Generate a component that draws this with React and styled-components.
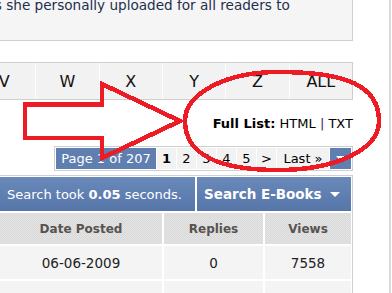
import React from 'react';
import styled, { createGlobalStyle } from 'styled-components';

const GlobalStyle = createGlobalStyle`
	html, body {
		margin: 0;
		padding: 0;
		background: #fff;
	}
	body {
		font-family: "DejaVu Sans", Verdana, sans-serif;
	}
`;

const Page = styled.div`
	position: relative;
	width: 392px;
	height: 293px;
	overflow: hidden;
	display: flex;
	align-items: flex-start;
	background: #fff;
`;

const Main = styled.div`
	width: 353px;
	flex-shrink: 0;
`;

const Gutter = styled.div`
	margin-left: 36px;
	width: 2px;
	align-self: stretch;
	background: #dadada;
`;

const Intro = styled.div`
	margin-top: -6px;
	height: 47px;
	box-sizing: border-box;
	padding-top: 2px;
	background: #f5f5f5;
	border-right: 1px solid #d0d0d0;
	border-bottom: 1px solid #d0d0d0;
	font-size: 13.6px;
	line-height: 18px;
	color: #1e2e4c;
	white-space: nowrap;
	overflow: hidden;
	text-indent: -9px;
`;

const LetterBar = styled.div`
	margin-top: 21px;
	margin-left: -28px;
	height: 38px;
	box-sizing: border-box;
	border: 1px solid #cfcfcf;
	background: #fff;
	display: grid;
	grid-template-columns: repeat(6, 1fr);
	gap: 1px;
`;

const Letter = styled.div`
	background: #f2f2f2;
	display: flex;
	align-items: center;
	justify-content: center;
	font-size: 16px;
	color: #111;
`;

const FullList = styled.div`
	height: 46px;
	display: flex;
	align-items: center;
	justify-content: flex-end;
	font-size: 13px;
	color: #000;
	white-space: pre;
`;

const Strong = styled.b`
	font-weight: bold;
`;

const Pipe = styled.span`
	color: #4a1a6a;
`;

const PagerRow = styled.div`
	display: flex;
	justify-content: flex-end;
`;

const Pager = styled.div`
	display: flex;
	gap: 1px;
	padding: 1px;
	border: 1px solid #cfcfcf;
	background: #fff;
`;

const PagerCell = styled.div`
	width: ${p => p.$w}px;
	height: 21px;
	display: flex;
	align-items: center;
	justify-content: center;
	font-size: 13px;
	font-weight: ${p => (p.$current ? 'bold' : 'normal')};
	background: ${p => (p.$blue ? '#5f7fb1' : '#f2f2f2')};
	color: ${p => (p.$blue ? '#fff' : '#000')};
	white-space: pre;
`;

const Caret = styled.span`
	display: inline-block;
	width: 0;
	height: 0;
	border-left: 5px solid transparent;
	border-right: 5px solid transparent;
	border-top: 5px solid #fff;
	margin-left: ${p => p.$gap || 0}px;
`;

const Table = styled.div`
	margin-top: 4px;
	margin-left: -2px;
	width: 355px;
	box-sizing: border-box;
	border: 1px solid #cfcfcf;
	padding: 1px;
	display: flex;
	flex-direction: column;
	gap: 2px;
	background: #fff;
`;

const BlueRow = styled.div`
	height: 34px;
	display: grid;
	grid-template-columns: 195px 1fr;
	gap: 2px;
`;

const BlueCell = styled.div`
	display: flex;
	align-items: center;
	padding-left: ${p => p.$pad}px;
	background: linear-gradient(#6a89bb, #5675a8);
	color: #fff;
	font-size: ${p => (p.$big ? '13.5px' : '13px')};
	font-weight: ${p => (p.$big ? 'bold' : 'normal')};
	white-space: pre;
`;

const Grid = styled.div`
	height: ${p => p.$h}px;
	display: grid;
	grid-template-columns: 162px 99px 1fr;
	gap: 2px;
	flex-shrink: 0;
`;

const HeadCell = styled.div`
	display: flex;
	align-items: center;
	justify-content: center;
	font-size: 12px;
	font-weight: bold;
	color: #575350;
	background: repeating-conic-gradient(#dadada 0% 25%, #e3e3e3 0% 50%) 0 0 / 2px 2px;
`;

const Cell = styled.div`
	display: flex;
	align-items: center;
	justify-content: center;
	font-size: 13.5px;
	color: #222;
	background: #f4f4f4;
`;

const Overlay = styled.svg`
	position: absolute;
	left: 0;
	top: 0;
	pointer-events: none;
`;

const letters = ['V', 'W', 'X', 'Y', 'Z', 'ALL'];
const pages = ['2', '3', '4', '5', '>'];
const rows = [
	{date: '06-06-2009', replies: '0', views: '7558', h: 33},
	{date: '11-11-2008', replies: '1', views: '5574', h: 33},
];

export default function App() {
	return (
		<>
			<GlobalStyle />
			<Page>
				<Main>
					<Intro>is she personally uploaded for all readers to</Intro>
					<LetterBar>
						{letters.map(l => <Letter key={l}>{l}</Letter>)}
					</LetterBar>
					<FullList>
						<Strong>Full List:</Strong> HTML <Pipe>|</Pipe> TXT
					</FullList>
					<PagerRow>
						<Pager>
							<PagerCell $w={100} $blue>Page 1 of 207</PagerCell>
							<PagerCell $w={19} $current>1</PagerCell>
							{pages.map(p => <PagerCell key={p} $w={19}>{p}</PagerCell>)}
							<PagerCell $w={52}>Last »</PagerCell>
							<PagerCell $w={21} $blue><Caret /></PagerCell>
						</Pager>
					</PagerRow>
					<Table>
						<BlueRow>
							<BlueCell $pad={7}>Search took <b>0.05</b> seconds.</BlueCell>
							<BlueCell $pad={7} $big>Search E-Books<Caret $gap={8} /></BlueCell>
						</BlueRow>
						<Grid $h={31}>
							<HeadCell>Date Posted</HeadCell>
							<HeadCell>Replies</HeadCell>
							<HeadCell>Views</HeadCell>
						</Grid>
						{rows.map(r => (
							<Grid key={r.date} $h={r.h}>
								<Cell>{r.date}</Cell>
								<Cell>{r.replies}</Cell>
								<Cell>{r.views}</Cell>
							</Grid>
						))}
					</Table>
				</Main>
				<Gutter />
				<Overlay width="392" height="293" viewBox="0 0 392 293" shapeRendering="crispEdges">
					<path
						d="M25 104.5 H102 V84 L180 121 L102 158 V138 H25 Z"
						fill="none"
						stroke="#ed1c24"
						strokeWidth="4.5"
						strokeLinejoin="miter"
					/>
					<path
						d="M185 121 C185 94 225 72 278 72 C345 72 379 85 379 121 C379 150 335 170 278 170 C220 170 185 155 185 121 Z"
						fill="none"
						stroke="#ed1c24"
						strokeWidth="4.5"
					/>
				</Overlay>
			</Page>
		</>
	);
}
